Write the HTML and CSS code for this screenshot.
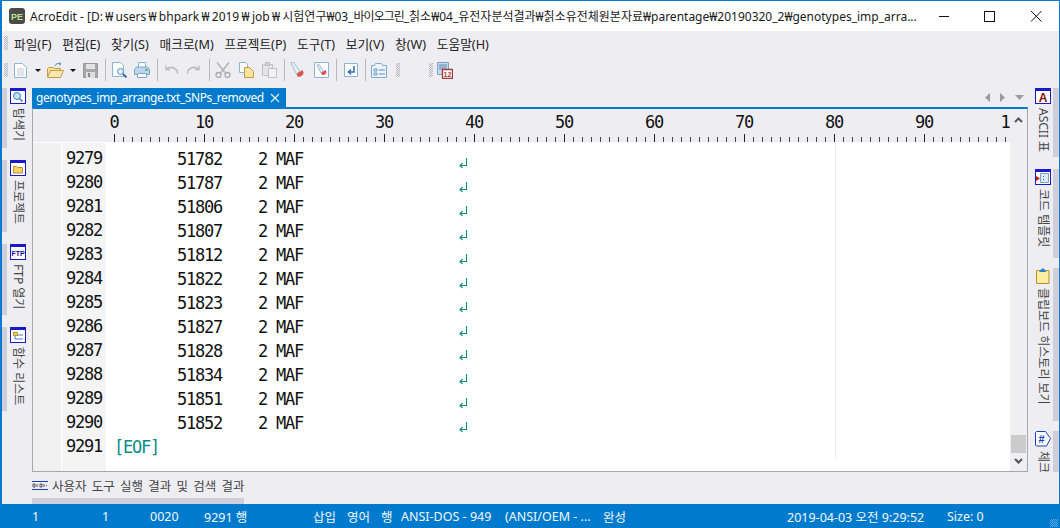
FILE: index.html
```html
<!DOCTYPE html>
<html lang="ko">
<head>
<meta charset="utf-8">
<title>AcroEdit</title>
<link rel="stylesheet" href="styles.css">
</head>
<body>
<div class="app">
  <header class="titlebar">
    <svg class="app-icon" width="16" height="16" viewBox="0 0 16 16"><rect width="16" height="16" rx="3" fill="#4a4a4a"/><text x="8" y="11.500" text-anchor="middle" class="logo-text">PE</text></svg>
    <div class="title-text">AcroEdit - [D:<span class="won lead">₩</span>users<span class="won lead">₩</span>bhpark<span class="won lead">₩</span>2019<span class="won lead">₩</span>job<span class="won lead">₩</span>시험연구<span class="won">₩</span>03_<span class="tight">바이오그린</span>_칡소<span class="won">₩</span>04_유전자분석결과<span class="won">₩</span>칡소유전체원본자료<span class="won">₩</span>parentage<span class="won">₩</span>20190320_2<span class="won">₩</span>genotypes_imp_arra...</div>
    <div class="win-btns">
      <svg width="46" height="30" viewBox="0 0 46 30"><path d="M18 15.500h10" stroke="#111" fill="none"/></svg>
      <svg width="46" height="30" viewBox="0 0 46 30"><rect x="17.500" y="10.500" width="10" height="10" stroke="#111" fill="none"/></svg>
      <svg width="46" height="30" viewBox="0 0 46 30"><path d="M18 10l10.500 10.500M28.500 10L18 20.500" stroke="#111" fill="none"/></svg>
    </div>
  </header>

  <nav class="menubar">
    <span class="grip"></span>
    <span class="menu m1">파일(F)</span><span class="menu">편집(E)</span><span class="menu">찾기(S)</span><span class="menu">매크로(M)</span><span class="menu">프로젝트(P)</span><span class="menu">도구(T)</span><span class="menu">보기(V)</span><span class="menu">창(W)</span><span class="menu">도움말(H)</span>
  </nav>

  <div class="toolbar">
    <span class="grip"></span>
    <svg class="t-new" width="13" height="15" viewBox="0 0 13 15"><path d="M.5.500h8l4 4v10H.5z" fill="#fff" stroke="#8db4d6"/><path d="M3 6h7M3 8h7M3 10h7M3 12h7" stroke="#c4c8d0"/></svg>
    <span class="caret t-c1"></span>
    <svg class="t-open" width="17" height="17" viewBox="0 0 17 17"><path d="M.5 14.500V6.500l1-1h5l1 1h6v2" fill="#f5e0a0" stroke="#c49a45"/><path d="M.5 15.500l3-7h13l-3 7z" fill="#fbe9b0" stroke="#c49a45"/><path d="M8 4c1-2.500 3-3 5-2.500M13 .5l1 1.500-2 1" fill="none" stroke="#4f86c0"/></svg>
    <span class="caret t-c2"></span>
    <svg class="t-save" width="15" height="15" viewBox="0 0 15 15"><path d="M.5.500h14v14H.5z" fill="#a8a8a8" stroke="#999"/><path d="M3 1h9v5H3z" fill="#e2e2e2"/><path d="M3 9h9v6H3z" fill="#ddd"/><path d="M5 10h2v4H5z" fill="#888"/></svg>
    <span class="sep t-s1"></span>
    <svg class="t-prev" width="16" height="16" viewBox="0 0 16 16"><path d="M.5.500h8l3 3v11H.5z" fill="#fff" stroke="#8db4d6"/><circle cx="8.500" cy="9.500" r="3" fill="#dff0fa" stroke="#5a8fbf"/><path d="M11 12l3.500 3.500" stroke="#3d6da8" stroke-width="2"/></svg>
    <svg class="t-print" width="16" height="16" viewBox="0 0 16 16"><path d="M4.500.500h7v5h-7z" fill="#fff" stroke="#8db4d6"/><path d="M.5 7.500l2-2.500h11l2 2.500v5H.5z" fill="#bcd6ec" stroke="#7aa6cc"/><path d="M3.500 11.500h9v4h-9z" fill="#fff" stroke="#7aa6cc"/><path d="M11 7h3v1.500h-3z" fill="#3fb56a"/></svg>
    <span class="sep t-s2"></span>
    <svg class="t-undo" width="13" height="10" viewBox="0 0 13 10"><path d="M1 .5v4h4M1.500 4.500C3 2 8 .5 12.500 6v3" fill="none" stroke="#b9b9bd" stroke-width="1.300"/></svg>
    <svg class="t-redo" width="13" height="10" viewBox="0 0 13 10"><path d="M12 .5v4H8M11.500 4.500C10 2 5 .5.500 6v3" fill="none" stroke="#b9b9bd" stroke-width="1.300"/></svg>
    <span class="sep t-s3"></span>
    <svg class="t-cut" width="16" height="16" viewBox="0 0 16 16"><path d="M2 .5l8 10M14 .5l-8 10" stroke="#b5b5b8" stroke-width="1.600" fill="none"/><circle cx="3.500" cy="13" r="2.500" fill="none" stroke="#a9a9ad" stroke-width="1.300"/><circle cx="12.500" cy="13" r="2.500" fill="none" stroke="#a9a9ad" stroke-width="1.300"/></svg>
    <svg class="t-copy" width="15" height="16" viewBox="0 0 15 16"><path d="M.5.500h6l2 2v8H.5z" fill="#fff" stroke="#8db4d6"/><path d="M5.500 5.500h5l4 4v6h-9z" fill="#fbe59b" stroke="#c49a45"/></svg>
    <svg class="t-paste" width="15" height="16" viewBox="0 0 15 16"><path d="M.5 2.500h10v11H.5z" fill="#e3e3e6" stroke="#c0c0c4"/><path d="M3.500.5h4v3h-4z" fill="#d6d6da" stroke="#bbb"/><path d="M6.500 6.500h8v9h-8z" fill="#f2f2f4" stroke="#c0c0c4"/></svg>
    <span class="sep t-s4"></span>
    <svg class="t-mark" width="15" height="16" viewBox="0 0 15 16"><path d="M1.500.5l3-.5 6.500 9.500-3.500 2.500z" fill="#e8eef5" stroke="#9dbad6"/><path d="M7.500 12l6-4 1 2.500c0 3-3.500 5-6 4z" fill="#d9534f"/></svg>
    <svg class="t-mark2" width="15" height="16" viewBox="0 0 15 16"><path d="M.5.500h14v15H.5z" fill="#fff" stroke="#8db4d6"/><path d="M3 3l2-.5 4.500 7-2.500 1.500z" fill="#e8eef5" stroke="#9dbad6"/><path d="M7 11l4.500-3 1 2c0 2-2.500 3.500-4.500 3z" fill="#d9534f"/></svg>
    <span class="sep t-s5"></span>
    <svg class="t-ret" width="14" height="14" viewBox="0 0 14 14"><path d="M.5.500h13v13H.5z" fill="#fff" stroke="#8db4d6"/><path d="M10 3v6H5M7 6.500L4.500 9 7 11.500" fill="none" stroke="#2f6db0" stroke-width="1.500"/></svg>
    <span class="sep t-s6"></span>
    <svg class="t-list" width="16" height="15" viewBox="0 0 16 15"><path d="M.5 2.500h3l1-2h6l1 2h4v12H.5z" fill="#eef3f9" stroke="#7fa9cf"/><path d="M3 6h3v2H3zM3 10h3v2H3z" fill="none" stroke="#6b9ac6"/><path d="M8 7h6M8 11h6" stroke="#5c8fc0"/></svg>
    <span class="grip t-g2"></span>
    <span class="grip t-g3"></span>
    <svg class="t-cal" width="16" height="17" viewBox="0 0 16 17"><path d="M.5.500h11v12H.5z" fill="#c7d9ec" stroke="#7fa0c4"/><path d="M2 3h8M2 5h8M2 7h8" stroke="#5c88b8"/><path d="M5.500 7.500h10v9h-10z" fill="#fff" stroke="#a33b3b" stroke-width="1.300"/><text x="10.500" y="15" text-anchor="middle" class="cal-text">12</text></svg>
  </div>

  <div class="workspace">
    <aside class="dock dock-left">
      <div class="dock-item l1">
        <svg width="16" height="16" viewBox="0 0 16 16"><rect x=".5" y=".5" width="15" height="15" fill="#fff" stroke="#1a1ac8"/><path d="M1 1h14v2H1z" fill="#1a1ac8"/><circle cx="7" cy="8" r="3.500" fill="#bfe3f5" stroke="#3f7fb0"/><path d="M9.500 10.500l3 3" stroke="#3f7fb0" stroke-width="1.500"/></svg>
        <span class="dock-label">탐색기</span>
      </div>
      <div class="dock-item l2">
        <svg width="16" height="16" viewBox="0 0 16 16"><rect x=".5" y=".5" width="15" height="15" fill="#fff" stroke="#1a1ac8"/><path d="M1 1h14v2H1z" fill="#1a1ac8"/><path d="M3.500 13V6.500h3l1 1h5V13z" fill="#f6d36a" stroke="#b8902e"/></svg>
        <span class="dock-label">프로젝트</span>
      </div>
      <div class="dock-item l3">
        <svg width="16" height="16" viewBox="0 0 16 16"><rect x=".5" y=".5" width="15" height="15" fill="#fff" stroke="#1a1ac8"/><path d="M1 1h14v2H1z" fill="#1a1ac8"/><text x="8" y="12" text-anchor="middle" class="ftp-text">FTP</text></svg>
        <span class="dock-label">FTP 열기</span>
      </div>
      <div class="dock-item l4">
        <svg width="16" height="16" viewBox="0 0 16 16"><rect x=".5" y=".5" width="15" height="15" fill="#fff" stroke="#1a1ac8"/><path d="M1 1h14v2H1z" fill="#1a1ac8"/><path d="M3.500 5.500h4v3h-4z" fill="#f6d36a" stroke="#b8902e"/><path d="M5 9v3h3M8 8h5M8 12h5" fill="none" stroke="#4a7fb5"/></svg>
        <span class="dock-label">함수 리스트</span>
      </div>
    </aside>

    <main class="center">
      <div class="tabstrip">
        <div class="tab">
          <span class="tab-name">genotypes_imp_arrange.txt_SNPs_removed</span>
          <svg width="10" height="10" viewBox="0 0 10 10"><path d="M1 1l8 8M9 1l-8 8" stroke="#d8ecfa" stroke-width="1.300" fill="none"/></svg>
        </div>
        <div class="tab-nav">
          <svg width="5" height="9" viewBox="0 0 5 9"><path d="M5 0v9L0 4.500z" fill="#9a9aa0"/></svg>
          <svg width="5" height="9" viewBox="0 0 5 9"><path d="M0 0v9l5-4.500z" fill="#9a9aa0"/></svg>
          <svg width="9" height="5" viewBox="0 0 9 5"><path d="M0 0h9L4.500 5z" fill="#9a9aa0"/></svg>
        </div>
      </div>
      <div class="frame">
        <div class="pane">
          <div class="ruler">
            <span>0</span><span>10</span><span>20</span><span>30</span><span>40</span><span>50</span><span>60</span><span>70</span><span>80</span><span>90</span><span>100</span>
          </div>
          <div class="body">
            <div class="margin"></div>
            <div class="nums">
              <div>9279</div><div>9280</div><div>9281</div><div>9282</div><div>9283</div><div>9284</div><div>9285</div><div>9286</div><div>9287</div><div>9288</div><div>9289</div><div>9290</div><div>9291</div>
            </div>
            <div class="code">
              <div class="line">       51782    2 MAF                 <svg class="ret" width="9" height="11" viewBox="0 0 9 11"><path d="M7.500 0v7.500H1M3.500 5L1 7.500 3.500 10" fill="none" stroke="#0b8a8a" stroke-width="1.100"/></svg></div>
              <div class="line">       51787    2 MAF                 <svg class="ret" width="9" height="11" viewBox="0 0 9 11"><path d="M7.500 0v7.500H1M3.500 5L1 7.500 3.500 10" fill="none" stroke="#0b8a8a" stroke-width="1.100"/></svg></div>
              <div class="line">       51806    2 MAF                 <svg class="ret" width="9" height="11" viewBox="0 0 9 11"><path d="M7.500 0v7.500H1M3.500 5L1 7.500 3.500 10" fill="none" stroke="#0b8a8a" stroke-width="1.100"/></svg></div>
              <div class="line">       51807    2 MAF                 <svg class="ret" width="9" height="11" viewBox="0 0 9 11"><path d="M7.500 0v7.500H1M3.500 5L1 7.500 3.500 10" fill="none" stroke="#0b8a8a" stroke-width="1.100"/></svg></div>
              <div class="line">       51812    2 MAF                 <svg class="ret" width="9" height="11" viewBox="0 0 9 11"><path d="M7.500 0v7.500H1M3.500 5L1 7.500 3.500 10" fill="none" stroke="#0b8a8a" stroke-width="1.100"/></svg></div>
              <div class="line">       51822    2 MAF                 <svg class="ret" width="9" height="11" viewBox="0 0 9 11"><path d="M7.500 0v7.500H1M3.500 5L1 7.500 3.500 10" fill="none" stroke="#0b8a8a" stroke-width="1.100"/></svg></div>
              <div class="line">       51823    2 MAF                 <svg class="ret" width="9" height="11" viewBox="0 0 9 11"><path d="M7.500 0v7.500H1M3.500 5L1 7.500 3.500 10" fill="none" stroke="#0b8a8a" stroke-width="1.100"/></svg></div>
              <div class="line">       51827    2 MAF                 <svg class="ret" width="9" height="11" viewBox="0 0 9 11"><path d="M7.500 0v7.500H1M3.500 5L1 7.500 3.500 10" fill="none" stroke="#0b8a8a" stroke-width="1.100"/></svg></div>
              <div class="line">       51828    2 MAF                 <svg class="ret" width="9" height="11" viewBox="0 0 9 11"><path d="M7.500 0v7.500H1M3.500 5L1 7.500 3.500 10" fill="none" stroke="#0b8a8a" stroke-width="1.100"/></svg></div>
              <div class="line">       51834    2 MAF                 <svg class="ret" width="9" height="11" viewBox="0 0 9 11"><path d="M7.500 0v7.500H1M3.500 5L1 7.500 3.500 10" fill="none" stroke="#0b8a8a" stroke-width="1.100"/></svg></div>
              <div class="line">       51851    2 MAF                 <svg class="ret" width="9" height="11" viewBox="0 0 9 11"><path d="M7.500 0v7.500H1M3.500 5L1 7.500 3.500 10" fill="none" stroke="#0b8a8a" stroke-width="1.100"/></svg></div>
              <div class="line">       51852    2 MAF                 <svg class="ret" width="9" height="11" viewBox="0 0 9 11"><path d="M7.500 0v7.500H1M3.500 5L1 7.500 3.500 10" fill="none" stroke="#0b8a8a" stroke-width="1.100"/></svg></div>
              <div class="line eof">[EOF]</div>
            </div>
          </div>
        </div>
        <div class="vscroll">
          <svg width="9" height="6" viewBox="0 0 9 6"><path d="M1 5l3.500-3.500L8 5" fill="none" stroke="#555" stroke-width="2"/></svg>
          <div class="thumb"></div>
          <svg width="9" height="6" viewBox="0 0 9 6"><path d="M1 1l3.500 3.500L8 1" fill="none" stroke="#555" stroke-width="2"/></svg>
        </div>
      </div>
    </main>

    <aside class="dock dock-right">
      <div class="dock-item r1">
        <svg width="16" height="16" viewBox="0 0 16 16"><rect x=".5" y=".5" width="15" height="15" fill="#fff" stroke="#1a1ac8"/><path d="M1 1h14v2H1z" fill="#1a1ac8"/><text x="8" y="14" text-anchor="middle" class="ascii-text">A</text></svg>
        <span class="dock-label">ASCII 표</span>
      </div>
      <div class="dock-item r2">
        <svg width="16" height="16" viewBox="0 0 16 16"><rect x=".5" y=".5" width="15" height="15" fill="#fff" stroke="#1a1ac8"/><path d="M1 1h14v2H1z" fill="#1a1ac8"/><path d="M5.500 4.500h8v9h-8z" fill="#dbe8f5" stroke="#7fa0c4"/><path d="M8 7h1v1H8zM8 10h1v1H8z" fill="#44608a"/><path d="M1 7l4 2.500L1 12z" fill="#c81818"/></svg>
        <span class="dock-label">코드 템플릿</span>
      </div>
      <div class="dock-item r3">
        <svg class="clip" width="14" height="16" viewBox="0 0 14 16"><path d="M.5 2.500h12.500v13H.5z" fill="#fbeea0" stroke="#b8902e"/><path d="M3 4l2-2.500L6.800 0 8.500 1.500 10.500 4z" fill="#2f7fd0"/></svg>
        <span class="dock-label">클립보드 히스토리 보기</span>
      </div>
      <div class="dock-item r4">
        <svg width="16" height="16" viewBox="0 0 16 16"><path d="M.5 1.500l1-1h9l5 7-4 7.500h-10l-1-1z" fill="#fff" stroke="#1a3fb8"/><text x="6.500" y="12" text-anchor="middle" class="hash-text">#</text></svg>
        <span class="dock-label">체크</span>
      </div>
    </aside>
  </div>

  <div class="outputbar">
    <div class="output-tab">
      <svg width="16" height="9" viewBox="0 0 16 9"><path d="M0 .5h16M0 8.500h16" stroke="#1a3fb8"/><path d="M1 3h2v3H1zM5 3v3M8 3h2v3H8zM12 3v3M14 4.500h1" fill="none" stroke="#555"/></svg>
      <span>사용자 도구 실행 결과 및 검색 결과</span>
    </div>
    <div class="output-strip"></div>
  </div>

  <footer class="statusbar">
    <span class="st s1">1</span><span class="st s2">1</span><span class="st s3">0020</span><span class="st s4">9291 행</span><span class="st s5">삽입</span><span class="st s6">영어</span><span class="st s7">행</span><span class="st s8">ANSI-DOS - 949</span><span class="st s9">(ANSI/OEM - ...</span><span class="st s10">완성</span><span class="st s11">2019-04-03 오전 9:29:52</span><span class="st s12">Size: 0</span>
    <span class="status-grip"></span>
  </footer>
</div>
</body>
</html>
```
FILE: styles.css
```css
* { box-sizing: border-box; }
html, body { margin: 0; padding: 0; }
body {
  width: 1060px;
  height: 528px;
  overflow: hidden;
  font-family: "Noto Sans", "Noto Sans CJK KR", sans-serif;
  font-size: 12px;
  color: #222;
}
.app {
  width: 1060px;
  height: 528px;
  display: flex;
  flex-direction: column;
  background: #eeeef2;
  border: 1px solid #0b7ad1;
  border-width: 1px 1px 0 2px;
}

/* title bar */
.titlebar {
  height: 30px;
  display: flex;
  align-items: center;
  background: #fff;
  flex: none;
}
.app-icon { margin-left: 7px; flex: none; }
.logo-text { font: bold 9px "Liberation Sans", sans-serif; fill: #bfe68a; }
.title-text {
  margin-left: 5px;
  white-space: nowrap;
  font-size: 12px;
  color: #1a1a1a;
}
.won.lead { margin: 0 2.300px; }
.tight { letter-spacing: -1px; }
.win-btns { margin-left: auto; display: flex; }
.win-btns svg { display: block; }

/* svg labels */
.cal-text { font: bold 7px "Liberation Sans", sans-serif; fill: #a33b3b; }
.ftp-text { font: bold 7px "Liberation Sans", sans-serif; fill: #12128a; }
.ascii-text { font: bold 12px "Liberation Sans", sans-serif; fill: #8b1010; }
.hash-text { font: bold 11px "Liberation Sans", sans-serif; fill: #1a3fb8; }

/* menu */
.menubar {
  height: 24px;
  flex: none;
  display: flex;
  align-items: center;
  gap: 10.700px;
  padding-left: 2px;
}
.grip {
  width: 4px;
  height: 14px;
  background-image: conic-gradient(#b4b4bb 25%, transparent 0 50%, #b4b4bb 0 75%, transparent 0);
  background-size: 2px 2px;
  flex: none;
}
.menu { font-size: 12.700px; color: #222; white-space: nowrap; }
.m1 { margin-left: -4.700px; }

/* toolbar */
.toolbar {
  height: 30px;
  flex: none;
  display: flex;
  align-items: center;
  padding-left: 2px;
}
.toolbar svg { display: block; flex: none; }
.caret {
  width: 0;
  height: 0;
  border: 3px solid transparent;
  border-top-color: #111;
  border-bottom-width: 0;
  flex: none;
}
.sep { width: 1px; height: 22px; background: #b9b9c0; flex: none; }
.t-new { margin-left: 6px; }
.t-c1 { margin-left: 8px; }
.t-open { margin-left: 6px; }
.t-c2 { margin-left: 6px; }
.t-save { margin-left: 7px; }
.t-s1 { margin-left: 7px; }
.t-prev { margin-left: 6px; }
.t-print { margin-left: 6px; }
.t-s2 { margin-left: 7px; }
.t-undo { margin-left: 7px; }
.t-redo { margin-left: 9px; }
.t-s3 { margin-left: 9px; }
.t-cut { margin-left: 5px; }
.t-copy { margin-left: 8px; }
.t-paste { margin-left: 8px; }
.t-s4 { margin-left: 7px; }
.t-mark { margin-left: 4px; }
.t-mark2 { margin-left: 10px; }
.t-s5 { margin-left: 7px; }
.t-ret { margin-left: 7px; }
.t-s6 { margin-left: 7px; }
.t-list { margin-left: 5px; }
.t-g2 { margin-left: 9px; }
.t-g3 { margin-left: 29px; }
.t-cal { margin-left: 4px; }

/* workspace */
.workspace {
  margin-top: 3px;
  height: 384px;
  flex: none;
  display: flex;
}
.dock { flex: none; display: flex; flex-direction: column; gap: 12px; }
.dock-left { width: 30px; }
.dock-right { width: 31px; gap: 10px; }
.dock-item {
  display: flex;
  flex-direction: column;
  flex: none;
  overflow: hidden;
}
.dock-item svg { display: block; flex: none; }
.dock-left .dock-item {
  border-left: 5px solid #cfcfdc;
  padding-left: 3px;
}
.dock-right .dock-item {
  border-right: 6px solid #cfcfdc;
  padding-left: 7px;
}
.dock-right .clip { margin-left: 1px; }
.dock-label {
  writing-mode: vertical-rl;
  text-orientation: sideways;
  font-size: 12px;
  line-height: 16px;
  width: 16px;
  margin-top: 4px;
  color: #444;
  white-space: nowrap;
}
.l1 { height: 60px; }
.l2 { height: 72px; }
.l3 { height: 71px; }
.l4 { height: 84px; }
.r1 { height: 69px; margin-bottom: 2px; }
.r2 { height: 89px; }
.r3 { height: 153px; }
.r4 { height: 41px; }

.center { flex: 1; min-width: 0; display: flex; flex-direction: column; }
.tabstrip { height: 19px; flex: none; display: flex; align-items: stretch; }
.tab {
  width: 254px;
  background: #007acc;
  color: #fff;
  display: flex;
  align-items: center;
  padding-left: 4px;
  gap: 6px;
}
.tab-name { font-size: 12px; letter-spacing: -.420px; white-space: nowrap; width: 228px; }
.tab-nav {
  margin-left: auto;
  display: flex;
  align-items: center;
  gap: 10px;
  padding-right: 4px;
}
.frame {
  flex: 1;
  min-height: 0;
  display: flex;
  border-top: 2px solid #007acc;
  border-left: 1px solid #a8a8a8;
  border-right: 1px solid #a8a8a8;
  border-bottom: 1px solid #a8a8a8;
  background: #fff;
}
.pane { flex: 1; min-width: 0; overflow: hidden; display: flex; flex-direction: column; }
.ruler, .nums, .code {
  font-family: "DejaVu Sans Mono", monospace;
  font-size: 17px;
  letter-spacing: -1.230px;
}
.ruler {
  height: 34px;
  flex: none;
  display: flex;
  padding-left: 36px;
  color: #111;
  background-color: #eeeef2;
  background-image:
    repeating-linear-gradient(90deg, #222 0 1px, transparent 1px 90px),
    repeating-linear-gradient(90deg, #444 0 1px, transparent 1px 9px),
    linear-gradient(#fff, #fff);
  background-size: 100% 8px, 100% 5px, 100% 1px;
  background-position: 81px 25px, 81px 28px, 0 33px;
  background-repeat: no-repeat;
  border-bottom: 1px solid #fff;
}
.ruler span {
  flex: none;
  width: 90px;
  text-align: center;
  line-height: 24px;
  padding-top: 1px;
}
.body { flex: 1; min-height: 0; display: flex; padding-top: 2px; background: linear-gradient(90deg, #f0f0f0 0 28px, #fff 28px) ; }
.margin { width: 28px; flex: none; }
.nums {
  width: 44px;
  margin-left: 1px;
  flex: none;
  padding-left: 4px;
  background: #f4f4f4;
  margin-top: -2px;
  padding-top: 3px;
  color: #111;
}
.nums div, .line { height: 24px; line-height: 24px; white-space: pre; }
.code {
  flex: 1;
  min-width: 0;
  padding-left: 8px;
  color: #111;
  background-image: linear-gradient(#ededed, #ededed);
  background-size: 1px 316px;
  background-position: 729px 0;
  background-repeat: no-repeat;
  margin-top: -2px;
  padding-top: 4px;
}
.ret { vertical-align: -4px; margin-left: 3px; }
.eof { color: #0b8a8a; }
.vscroll {
  width: 17px;
  flex: none;
  background: #efeff1;
  display: flex;
  flex-direction: column;
  align-items: center;
  padding-top: 8px;
}
.thumb { width: 15px; height: 18px; margin-top: 312px; margin-bottom: 5px; background: #cbcbcb; flex: none; }

/* output */
.outputbar {
  height: 32px;
  flex: none;
  padding-left: 30px;
  display: flex;
  flex-direction: column;
  justify-content: flex-end;
}
.output-tab {
  display: flex;
  align-items: center;
  gap: 4px;
  height: 26px;
  color: #444;
  font-size: 12.500px;
  word-spacing: 2px;
}
.output-strip { width: 212px; height: 6px; background: #cfcfdc; }

/* status */
.statusbar {
  height: 24px;
  flex: none;
  margin: 0 -1px 0 -2px;
  background: #007acc;
  color: #f2f8fc;
  display: flex;
  align-items: center;
  font-size: 12.500px;
  white-space: nowrap;
}
.st { flex: none; }
.s1 { margin-left: 32px; width: 70px; }
.s2 { width: 48px; }
.s3 { width: 54px; }
.s4 { width: 109px; }
.s5 { width: 34px; }
.s6 { width: 34px; }
.s7 { width: 20px; }
.s8 { width: 104px; }
.s9 { width: 98px; }
.s10 { width: 184px; }
.s11 { width: 160px; }
.s12 { width: 60px; }
.status-grip {
  margin-left: auto;
  margin-right: 2px;
  align-self: flex-end;
  width: 8px;
  height: 8px;
  margin-bottom: 1px;
  background-image: conic-gradient(#5aa8dd 25%, transparent 0 50%, #5aa8dd 0 75%, transparent 0);
  background-size: 2px 2px;
}
```
